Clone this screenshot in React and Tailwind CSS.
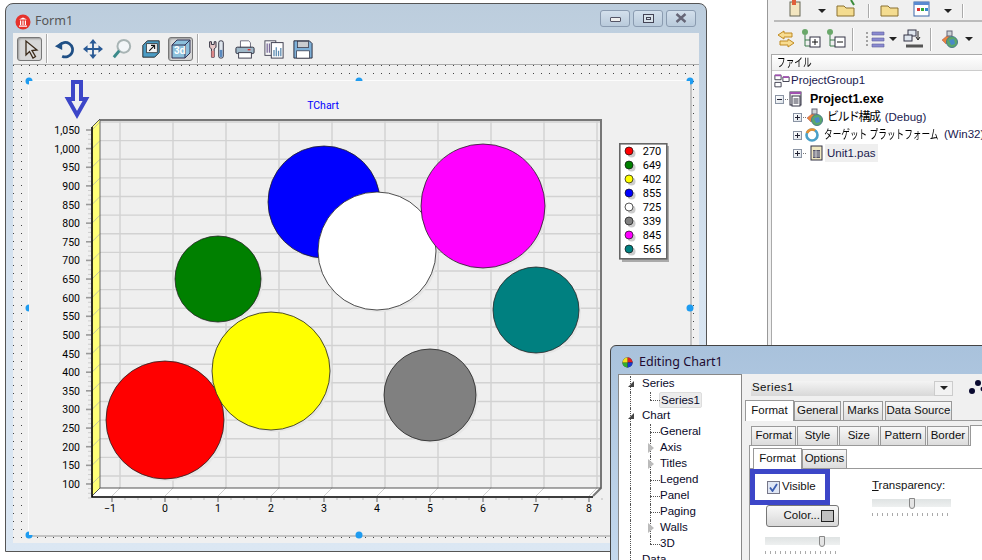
const CJK = "font-['Liberation_Sans','Noto_Sans_CJK_JP',sans-serif]";

function Sep({ h = 'h-[29px]' }) {
  return <div className={`w-[2px] ${h} border-l border-[#aaa] border-r-white border-r`} />;
}

function TbIcon({ children, pressed, w = 20 }) {
  return (
    <div className={`flex items-center justify-center h-[24px] ${pressed ? 'w-[25px] rounded-[3px] border border-[#777] bg-[#d8d8d8] shadow-[inset_1px_1px_2px_#999]' : ''}`} style={pressed ? undefined : { width: w }}>
      <svg width="22" height="22" viewBox="0 0 22 22">{children}</svg>
    </div>
  );
}

function FormToolbar() {
  return (
    <div className="h-[32px] shrink-0 flex items-center pl-[4px] bg-[#efefef] border-b border-[#aaa]">
      <TbIcon pressed>
        <path d="M7 3 L7 17 L10.5 13.5 L14 20 L16.5 18.5 L13 12.5 L18 12 Z" fill="#ddd" stroke="#3a2a1a" strokeWidth="1.3" />
      </TbIcon>
      <div className="ml-[4px] mr-[6px]"><Sep /></div>
      <div className="flex items-center gap-[9px]">
        <TbIcon>
          <path d="M6 7 A8 8 0 1 1 9 19" fill="none" stroke="#1f4f85" strokeWidth="3" />
          <path d="M1 8 L9 3 L9 12 Z" fill="#1f4f85" />
        </TbIcon>
        <TbIcon>
          <path d="M11 2 V20 M2 11 H20" stroke="#2a5a95" strokeWidth="2" />
          <path d="M11 0 L15 5 H7 Z M11 22 L15 17 H7 Z M0 11 L5 7 V15 Z M22 11 L17 7 V15 Z" fill="#2a5a95" />
        </TbIcon>
        <TbIcon>
          <circle cx="13" cy="8" r="7" fill="#f2f6f8" stroke="#a8b4b4" strokeWidth="2.2" />
          <path d="M8 13 L2 20" stroke="#3a8a8a" strokeWidth="3.2" />
        </TbIcon>
        <TbIcon>
          <path d="M2 7 L7 2 H20 V15 L15 20 H2 Z" fill="#4b9cc4" stroke="#222" strokeWidth="1" />
          <path d="M6 6 H18 V16 H6 Z" fill="#f4f4f4" stroke="#222" strokeWidth="0.8" transform="translate(0,-1)" />
          <path d="M9 13 L15 7 M11 7 H15 V11" fill="none" stroke="#111" strokeWidth="1.2" />
        </TbIcon>
      </div>
      <div className="ml-[7px]">
        <TbIcon pressed>
          <path d="M2 7 L7 2 H20 V15 L15 20 H2 Z" fill="#8cc0dc" stroke="#335" strokeWidth="1" />
          <path d="M2 7 H15 V20 M15 7 L20 2" fill="none" stroke="#335" />
          <text x="4" y="16" fontSize="10" fontWeight="700" fill="#fff" className="font-['Liberation_Sans']">3d</text>
        </TbIcon>
      </div>
      <div className="ml-[4px] mr-[7px]"><Sep /></div>
      <div className="flex items-center gap-[9px]">
        <TbIcon>
          <path d="M4 3 V9 L6 11 V20 H9 V11 L11 9 V3 L9 3 V6 H6 V3 Z" fill="#e8c8c8" stroke="#223" strokeWidth="1" />
          <path d="M6 13 H9 V20 H6 Z" fill="#d88" />
          <rect x="14" y="2" width="5" height="19" rx="2" fill="#dfe6ee" stroke="#223" />
          <rect x="15" y="12" width="3" height="8" fill="#5a8ac0" />
        </TbIcon>
        <TbIcon>
          <path d="M6 2 H15 L17 4 V10 H6 Z" fill="#fff" stroke="#667" />
          <rect x="1" y="9" width="20" height="7" rx="1.5" fill="#9fb8c8" stroke="#223" />
          <rect x="4" y="15" width="14" height="6" fill="#fff" stroke="#334" />
          <rect x="14" y="11" width="3" height="1.5" fill="#d33" />
        </TbIcon>
        <TbIcon>
          <rect x="1" y="2" width="12" height="16" fill="#f7f7f7" stroke="#445" />
          <rect x="8" y="4" width="13" height="17" fill="#fff" stroke="#334" />
          <path d="M3.5 5 V15 M6 5 V15" stroke="#7a6a9a" strokeWidth="1.4" />
          <path d="M11 12 V19 M13.5 9 V19 M16 13 V19 M18.5 10 V19" stroke="#5a8ab0" strokeWidth="1.4" />
        </TbIcon>
        <TbIcon>
          <path d="M1 2 H18 L21 5 V21 H1 Z" fill="#7eb0d8" stroke="#223" />
          <rect x="5" y="2.5" width="12" height="7" fill="#c9ccd0" stroke="#334" strokeWidth="0.8" />
          <rect x="4" y="13" width="14" height="8" fill="#fff" stroke="#334" strokeWidth="0.8" />
        </TbIcon>
      </div>
    </div>
  );
}

const bubbles = [
  [165, 420, 59, '#ff0000'], [218, 279, 43, '#008000'], [271, 371, 59, '#ffff00'], [324, 202, 56, '#0000ff'],
  [377, 251, 59, '#ffffff'], [430, 395, 46, '#808080'], [483, 206, 62, '#ff00ff'], [536, 310, 43, '#008080'],
];
const legend = [
  ['270', '#ff0000'], ['649', '#008000'], ['402', '#ffff00'], ['855', '#0000ff'],
  ['725', '#ffffff'], ['339', '#808080'], ['845', '#ff00ff'], ['565', '#008080'],
];
const yVals = ['1,050', '1,000', '950', '900', '850', '800', '750', '700', '650', '600', '550', '500', '450', '400', '350', '300', '250', '200', '150', '100'];
const yAt = (i) => 130 + i * 18.63;
const xAt = (i) => 112 + i * 53;

function Chart() {
  return (
    <svg className="block overflow-visible font-['Roboto',sans-serif]" width="661" height="454" viewBox="29 81 661 454">
      <text x="323" y="109" fontSize="10.5" fill="#0000ff" textAnchor="middle">TChart</text>
      <path d="M73 82 H81 V99 H86 L77 115 L68 99 H73 Z" fill="none" stroke="#3c46c8" strokeWidth="4" />
      <rect x="100" y="119" width="501" height="369" fill="#efefef" />
      {yVals.map((_, i) => <line key={i} x1="100" x2="601" y1={yAt(i) - 8} y2={yAt(i) - 8} stroke="#d2d2d2" strokeWidth="1.4" />)}
      {Array.from({ length: 10 }).map((_, i) => <line key={i} x1={xAt(i) + 8} x2={xAt(i) + 8} y1="119" y2="488" stroke="#d2d2d2" strokeWidth="1.4" />)}
      <path d="M92 127 L100 119 V488 L92 496 Z" fill="#ffff78" />
      {yVals.map((_, i) => <line key={i} x1="92" x2="100" y1={yAt(i)} y2={yAt(i) - 8} stroke="#c8c8a0" />)}
      <path d="M92 496 L100 488 H601 L593 496 Z" fill="#ffffff" />
      {Array.from({ length: 10 }).map((_, i) => <line key={i} x1={xAt(i)} x2={xAt(i) + 8} y1="496" y2="488" stroke="#cfcfcf" />)}
      <path d="M100 120 H601 V488 L593 496" fill="none" stroke="#777" strokeWidth="2" />
      <path d="M100 488 V120" stroke="#666" strokeWidth="1" />
      <path d="M100 488 H601" stroke="#555" strokeWidth="1.2" />
      <path d="M92 127 L100 119 M92 496 L100 488" stroke="#555" />
      <path d="M92 127 V497 H593" fill="none" stroke="#000" strokeWidth="1.6" />
      {yVals.map((v, i) => (
        <g key={v}>
          <line x1="86" x2="91" y1={yAt(i)} y2={yAt(i)} stroke="#999" strokeWidth="1.6" />
          <line x1="88" x2="91" y1={yAt(i) + 4.6} y2={yAt(i) + 4.6} stroke="#ccc" />
          <line x1="88" x2="91" y1={yAt(i) + 9.3} y2={yAt(i) + 9.3} stroke="#ccc" />
          <line x1="88" x2="91" y1={yAt(i) + 14} y2={yAt(i) + 14} stroke="#ccc" />
          <text x="80" y={yAt(i) + 4} fontSize="10.5" fill="#000" textAnchor="end">{v}</text>
        </g>
      ))}
      {Array.from({ length: 10 }).map((_, i) => (
        <g key={i}>
          <line x1={xAt(i)} x2={xAt(i)} y1="498" y2="502" stroke="#999" strokeWidth="1.6" />
          <line x1={xAt(i) + 13} x2={xAt(i) + 13} y1="498" y2="500" stroke="#bbb" />
          <line x1={xAt(i) + 26} x2={xAt(i) + 26} y1="498" y2="500" stroke="#bbb" />
          <line x1={xAt(i) + 39} x2={xAt(i) + 39} y1="498" y2="500" stroke="#bbb" />
          <text x={xAt(i) - (i === 0 ? 2 : 0)} y="512" fontSize="10.5" fill="#000" textAnchor="middle">{i === 0 ? '−1' : i - 1}</text>
        </g>
      ))}
      {bubbles.map(([cx, cy, r, c]) => (
        <g key={cx}>
          <circle cx={cx + 2} cy={cy + 2} r={r} fill="#e6e6e6" />
          <circle cx={cx} cy={cy} r={r} fill={c} stroke="#222" strokeWidth="0.8" />
        </g>
      ))}
      <rect x="622" y="146" width="47" height="116" fill="#aaa" />
      <rect x="619.8" y="143.8" width="47" height="115" fill="#fff" stroke="#666" strokeWidth="1.6" />
      {legend.map(([v, c], i) => (
        <g key={v}>
          <circle cx="630" cy={152 + i * 14} r="4" fill="#ccc" transform="translate(1.5 1.5)" />
          <circle cx="629" cy={151 + i * 14} r="4" fill={c} stroke="#111" strokeWidth="0.7" />
          <text x="652" y={154.5 + i * 14} fontSize="11" textAnchor="middle" fill="#000">{v}</text>
        </g>
      ))}
      <g fill="#1f9cf0">
        <path d="M29 81 L29 84.5 A3.5 3.5 0 1 1 32.5 81 Z" />
        <path d="M690 81 L686.5 81 A3.5 3.5 0 1 1 690 84.5 Z" />
        <path d="M29 535 L29 531.5 A3.5 3.5 0 1 0 32.5 535 Z" />
        <path d="M355.5 81 A3.5 3.5 0 0 1 362.5 81 Z" />
        <path d="M29 304.5 A3.5 3.5 0 0 0 29 311.5 Z" />
        <circle cx="690" cy="308" r="3.5" />
        <circle cx="359" cy="535" r="3.5" />
        <circle cx="690" cy="535" r="3.5" />
      </g>
    </svg>
  );
}

function WinBtn({ children }) {
  return (
    <div className="w-[30px] h-[17px] flex items-center justify-center rounded-[3px] border border-[#8a9bb0] bg-gradient-to-b from-[#d3e0ec] to-[#b9cadb]">
      {children}
    </div>
  );
}

function FormWindow() {
  return (
    <div className="absolute left-[5px] top-[3px] w-[702px] h-[549px] flex flex-col rounded-t-[8px] border border-[#555] bg-gradient-to-b from-[#bccddd] via-[#d7e4f1] to-[#dbe7f3] pl-[7px] pr-[7px] pb-[8px]">
      <div className="h-[29px] shrink-0 flex items-center pt-[6px]">
        <svg width="16" height="16" viewBox="0 0 16 16" className="ml-[2px]">
          <circle cx="8" cy="8" r="7.5" fill="#e6322c" />
          <path d="M4 5.5 L8 3.5 L12 5.5 Z M4 11.5 H12 V12.8 H4 Z M5 6.5 H6.2 V11 H5 Z M7.4 6.5 H8.6 V11 H7.4 Z M9.8 6.5 H11 V11 H9.8 Z" fill="#fff" />
        </svg>
        <span className="ml-[4px] text-[12.5px] text-[#555] font-['Noto_Sans',sans-serif]">Form1</span>
        <div className="ml-auto flex gap-[3px] mr-[3px] -mt-[7px]">
          <WinBtn><div className="w-[11px] h-[5px] mt-[3px] border border-[#556] bg-[#eee] rounded-[1px]" /></WinBtn>
          <WinBtn><div className="w-[11px] h-[9px] border border-[#445] bg-[#d8e2ea] flex items-center justify-center"><div className="w-[5px] h-[3px] border border-[#445]" /></div></WinBtn>
          <WinBtn>
            <svg width="12" height="10" viewBox="0 0 12 10"><path d="M1.5 1 L10.5 9 M10.5 1 L1.5 9" stroke="#667" strokeWidth="2.4" /></svg>
          </WinBtn>
        </div>
      </div>
      <FormToolbar />
      <div className="relative flex-1 min-h-0 bg-[#f0f0f0] pl-[15px] pt-[15px]">
        <div className="absolute inset-0 bg-[linear-gradient(90deg,#444_1px,transparent_1px)] bg-[size:8px_8px] [mask-image:linear-gradient(#000_1px,transparent_1px)] [mask-size:8px_8px]" />
        <div className="relative box-content w-[661px] h-[454px] bg-[#f0f0f0] border-l border-t border-[#fcfcfc] border-r-2 border-b-2 border-r-[#c4c4c4] border-b-[#c4c4c4]">
          <Chart />
        </div>
      </div>
    </div>
  );
}

function Plus({ minus }) {
  return (
    <div className="w-[9px] h-[9px] border border-[#8a94a4] bg-gradient-to-br from-white to-[#dde3ea] flex items-center justify-center relative shrink-0">
      <div className="w-[5px] h-[1px] bg-[#223]" />
      {!minus && <div className="absolute w-[1px] h-[5px] bg-[#223]" />}
    </div>
  );
}

function Gear() {
  return (
    <svg width="18" height="18" viewBox="0 0 18 18" className="shrink-0">
      <path d="M1 10 L7 5 L10 8 L5 14 Z" fill="#e8843c" stroke="#a55" strokeWidth="0.5" />
      <rect x="6" y="1" width="5" height="5" fill="#cfd4d8" stroke="#667" />
      <circle cx="11" cy="12" r="5.5" fill="#5aa86a" stroke="#4a7a8a" />
      <path d="M8 10 L13 9 L14 14 L10 15 Z" fill="#4a8ac8" />
    </svg>
  );
}

function IdeTool({ children }) {
  return <svg width="22" height="22" viewBox="0 0 22 22" className="shrink-0">{children}</svg>;
}

function Caret() {
  return <div className="w-0 h-0 border-x-[4px] border-x-transparent border-t-[4px] border-t-[#222]" />;
}

function Ide() {
  return (
    <div className="absolute left-[767px] top-0 w-[215px] h-[350px] flex flex-col bg-[#f0f0f0] border-l border-[#999] pl-[2px]">
      <div className="h-[22px] shrink-0 flex items-end pl-[12px] border-b-2 border-[#bbb] ml-[4px] overflow-hidden">
        <div className="flex items-center gap-[10px] h-[30px] -mb-[6px]">
          <IdeTool><rect x="4" y="2" width="10" height="14" fill="#f3e6c0" stroke="#665" /><rect x="6" y="0" width="4" height="5" fill="#e0603a" /></IdeTool>
          <Caret />
          <IdeTool><path d="M1 6 H8 L10 8 H18 V16 H1 Z" fill="#f4dc90" stroke="#8a7030" /><path d="M15 0 L18 5" stroke="#3a8a3a" strokeWidth="2" /></IdeTool>
          <Sep h="h-[14px]" />
          <IdeTool><path d="M1 6 H8 L10 8 H18 V16 H1 Z" fill="#f4dc90" stroke="#8a7030" /></IdeTool>
          <IdeTool><rect x="2" y="2" width="15" height="14" fill="#fff" stroke="#3a66a8" /><rect x="2" y="2" width="15" height="3" fill="#5a8ad0" /><rect x="5" y="8" width="3" height="3" fill="#d33" /><rect x="9" y="8" width="3" height="3" fill="#3a3" /><rect x="13" y="8" width="3" height="3" fill="#38c" /></IdeTool>
          <Caret />
          <Sep h="h-[14px]" />
        </div>
      </div>
      <div className="h-[32px] shrink-0 flex items-center pl-[5px] pt-[2px]">
        <div className="flex items-center gap-[3px]">
          <IdeTool>
            <path d="M9 3 L3 7 L9 11 V9 H17 V5 H9 Z M13 11 L19 15 L13 19 V17 H5 V13 H13 Z" fill="#f8dc90" stroke="#c08a20" />
          </IdeTool>
          <IdeTool>
            <circle cx="5" cy="4" r="3" fill="#6aa86a" /><path d="M5 7 V18 H10 M5 12 H10" stroke="#3a7a4a" fill="none" />
            <rect x="10" y="9" width="10" height="10" fill="#fff" stroke="#334" /><path d="M12 14 H18 M15 11 V17" stroke="#111" />
          </IdeTool>
          <IdeTool>
            <circle cx="5" cy="4" r="3" fill="#6aa86a" /><path d="M5 7 V18 H10 M5 12 H10" stroke="#3a7a4a" fill="none" />
            <rect x="10" y="9" width="10" height="10" fill="#fff" stroke="#334" /><path d="M12 14 H18" stroke="#111" />
          </IdeTool>
        </div>
        <div className="ml-[5px] mr-[10px]"><Sep h="h-[23px]" /></div>
        <IdeTool>
          <path d="M8 4 H20 V7 H8 Z M8 10 H20 V13 H8 Z M8 16 H20 V19 H8 Z" fill="#8a8ad0" stroke="#5a5a9a" strokeWidth="0.6" />
          <path d="M3 4 V19" stroke="#555" strokeDasharray="2 2" />
        </IdeTool>
        <div className="ml-[3px] mr-[6px]"><Caret /></div>
        <IdeTool>
          <rect x="5" y="2" width="8" height="6" fill="#dfe6ee" stroke="#334" /><rect x="1" y="7" width="8" height="6" fill="#dfe6ee" stroke="#334" />
          <path d="M15 3 V11 M13 9 L15 12 L17 9" stroke="#222" fill="none" /><path d="M3 18 H20" stroke="#555" strokeWidth="3" />
        </IdeTool>
        <div className="ml-[5px] mr-[9px]"><Sep h="h-[23px]" /></div>
        <Gear />
        <div className="ml-[6px]"><Caret /></div>
      </div>
      <div className="flex-1 bg-white border-t border-l border-[#aaa] ml-[1px] font-['Liberation_Sans','Noto_Sans_CJK_JP',sans-serif] text-[11.5px] text-[#1a1a50]">
        <div className="h-[16px] flex items-center pl-[5px] text-[12px] text-black bg-gradient-to-b from-white to-[#f0f0f0] border-b border-[#ccc]">
          <span className="inline-block origin-left scale-x-[0.72] whitespace-nowrap">ファイル</span>
        </div>
        <div className="h-[18px] flex items-center pl-[2px] mt-[1px]">
          <svg width="16" height="15" viewBox="0 0 18 16" className="shrink-0"><path d="M1 1 H8 V6 H1 Z M10 3 H17 V8 H10 Z M1 9 H8 V14 H1 Z" fill="#fff" stroke="#334" /><path d="M1 1 H8 M10 3 H17" stroke="#a050b0" strokeWidth="2" /></svg>
          <span className="ml-[1px] whitespace-nowrap">ProjectGroup1</span>
        </div>
        <div className="h-[18px] flex items-center pl-[3px]">
          <Plus minus />
          <div className="w-[3px] ml-[1px] border-t border-dotted border-[#777]" />
          <svg width="16" height="16" viewBox="0 0 16 16" className="shrink-0"><rect x="2" y="1" width="11" height="13" fill="#eee" stroke="#334" /><rect x="2" y="1" width="11" height="2" fill="#a050b0" /><rect x="4" y="5" width="8" height="10" fill="#fff" stroke="#334" /><path d="M5.5 8 H10.5 M5.5 10 H10.5 M5.5 12 H10.5" stroke="#334" /></svg>
          <span className="ml-[6px] font-bold text-[12.5px] text-black whitespace-nowrap">Project1.exe</span>
        </div>
        <div className="h-[18px] flex items-center pl-[21px]">
          <Plus />
          <div className="w-[3px] ml-[1px] border-t border-dotted border-[#777]" />
          <Gear />
          <span className="ml-[3px] whitespace-nowrap"><span className="text-black tracking-[-1.5px] text-[12px] mr-[2px]">ビルド構成</span> (Debug)</span>
        </div>
        <div className="h-[18px] flex items-center pl-[21px]">
          <Plus />
          <div className="w-[3px] ml-[1px] border-t border-dotted border-[#777]" />
          <svg width="16" height="16" viewBox="0 0 16 16" className="shrink-0 mx-[1px]"><circle cx="8" cy="8" r="5.5" fill="none" stroke="#4aa0c8" strokeWidth="2.6" /><path d="M3 6 A5.5 5.5 0 0 1 11 3.4" fill="none" stroke="#e89030" strokeWidth="2.6" /></svg>
          <span className="ml-[3px] flex items-center whitespace-nowrap">
            <span className="inline-block w-[117px] origin-left scale-x-[0.72] text-[12px] text-black">ターゲット プラットフォーム</span>
            <span className="ml-[3px]">(Win32)</span>
          </span>
        </div>
        <div className="h-[18px] flex items-center pl-[21px]">
          <Plus />
          <div className="w-[3px] ml-[1px] border-t border-dotted border-[#777]" />
          <svg width="16" height="16" viewBox="0 0 16 16" className="shrink-0 ml-[2px]"><rect x="3" y="1" width="11" height="14" fill="#f0e8c0" stroke="#334" /><rect x="5" y="5" width="7" height="8" fill="#556" /><path d="M5 7 H12 M5 9 H12 M5 11 H12 M8 5 V13" stroke="#eee" strokeWidth="0.7" /></svg>
          <span className="ml-[1px] px-[2px] bg-[#efefef] whitespace-nowrap h-[18px] leading-[18px]">Unit1.pas</span>
        </div>
      </div>
    </div>
  );
}

function TreeRow({ label, depth, last, kind, selected }) {
  return (
    <div className="h-[16px] flex items-center text-[#0a0a2a] relative">
      <div className="w-[20px] h-[16px] shrink-0 border-l border-dotted border-[#555] relative">
        {depth === 0 && kind === 'open' && <div className="absolute -left-[3px] top-[5px] w-0 h-0 border-l-[6px] border-l-transparent border-b-[6px] border-b-[#444]" />}
      </div>
      {depth === 1 ? (
        <div className="flex items-center w-[10px] h-[16px] shrink-0 relative">
          {kind !== 'closed' && <div className="w-[10px] border-t border-dotted border-[#555]" />}
          <div className={`absolute left-0 top-0 border-l border-dotted border-[#555] ${last ? 'h-[8px]' : 'h-[16px]'}`} />
          {kind === 'closed' && <div className="absolute -left-[2px] top-[3px] w-0 h-0 border-y-[5px] border-y-transparent border-l-[6px] border-l-[#bbb]" />}
        </div>
      ) : <span className="-ml-[8px]" />}
      <span className={selected ? 'px-[1px] -ml-[1px] bg-[#ececec] border border-[#ddd] rounded-[2px] leading-[14px]' : ''}>{label}</span>
    </div>
  );
}

function Tab({ label, w, active, grad }) {
  return (
    <div className={`h-[19px] flex items-center justify-center border border-[#999] border-b-0 whitespace-nowrap ${active ? 'bg-white h-[21px] relative z-10 -mb-[1px]' : grad ? 'bg-gradient-to-b from-[#f8f8f8] to-[#dcdcdc]' : 'bg-[#f2f2f2]'}`} style={{ width: w }}>{label}</div>
  );
}

function Slider({ w, pos }) {
  return (
    <div style={{ width: w }}>
      <div className="h-[8px] bg-gradient-to-b from-[#dfe3e3] to-[#eef0f0] relative">
        <div className="absolute -top-[1px] w-[6px] h-[11px] bg-[#e4e4e4] border border-[#888] rounded-b-[3px]" style={{ left: pos }} />
      </div>
      <div className="h-[3px] mt-[6px] bg-[repeating-linear-gradient(90deg,#aaa_0px,#aaa_1px,transparent_1px,transparent_5px)]" />
    </div>
  );
}

function EditDialog() {
  return (
    <div className="absolute left-[610px] top-[345px] w-[400px] h-[230px] rounded-t-[6px] border border-[#444] bg-gradient-to-b from-[#a9c2dc] to-[#c6daee] font-['Liberation_Sans',sans-serif] text-[11.5px] text-[#111]">
      <div className="h-[28px] flex items-center pl-[11px] pt-[5px]">
        <svg width="11" height="11" viewBox="0 0 12 12"><circle cx="6" cy="6" r="5.5" fill="#111" /><path d="M6 6 L6 .5 A5.5 5.5 0 0 1 11.5 6 Z" fill="#e02020" /><path d="M6 6 L11.5 6 A5.5 5.5 0 0 1 6 11.5 Z" fill="#1a3ad0" /><path d="M6 6 L6 11.5 A5.5 5.5 0 0 1 .5 6 Z" fill="#30b030" /><path d="M6 6 L.5 6 A5.5 5.5 0 0 1 6 .5 Z" fill="#f0e020" /></svg>
        <span className="ml-[6px] text-[12.5px] text-[#200a30] font-['Noto_Sans',sans-serif]">Editing Chart1</span>
      </div>
      <div className="flex h-[202px] pl-[7px]">
        <div className="w-[124px] shrink-0 bg-white border-l border-t border-r border-[#888] pl-[11px] pt-[1px] overflow-hidden">
          <TreeRow label="Series" depth={0} kind="open" />
          <TreeRow label="Series1" depth={1} last selected />
          <TreeRow label="Chart" depth={0} kind="open" />
          <TreeRow label="General" depth={1} />
          <TreeRow label="Axis" depth={1} kind="closed" />
          <TreeRow label="Titles" depth={1} kind="closed" />
          <TreeRow label="Legend" depth={1} />
          <TreeRow label="Panel" depth={1} />
          <TreeRow label="Paging" depth={1} />
          <TreeRow label="Walls" depth={1} kind="closed" />
          <TreeRow label="3D" depth={1} last />
          <TreeRow label="Data" depth={0} />
        </div>
        <div className="flex-1 bg-[#f0f0f0] pl-[3px] pt-[6px] overflow-hidden">
          <div className="flex items-center ml-[6px] h-[16px]">
            <div className="w-[183px] h-[15px] flex items-center pl-[1px] bg-gradient-to-b from-[#f4f4f4] to-[#d8d8d8] tracking-[0.4px]">Series1</div>
            <div className="w-[19px] h-[15px] flex items-center justify-center bg-[#f2f2f2] border border-[#ccc]"><Caret /></div>
            <svg width="30" height="18" viewBox="0 0 30 18" className="ml-[16px]"><circle cx="3" cy="12" r="3" fill="#0a0a30" /><circle cx="9" cy="4" r="3" fill="#0a0a30" /><circle cx="14" cy="10" r="2.5" fill="#0a0a30" /></svg>
          </div>
          <div className="flex items-end mt-[4px] pl-[0px] h-[21px] border-b border-[#999]">
            <Tab label="Format" w={49} active />
            <Tab label="General" w={47} grad />
            <div className="w-[2px]" />
            <Tab label="Marks" w={40} grad />
            <div className="w-[2px]" />
            <Tab label="Data Source" w={67} grad />
          </div>
          <div className="flex items-end mt-[5px] pl-[6px] h-[19px]">
            <Tab label="Format" w={46} grad />
            <div className="w-[1px]" />
            <Tab label="Style" w={41} grad />
            <div className="w-[1px]" />
            <Tab label="Size" w={41} grad />
            <div className="w-[1px]" />
            <Tab label="Pattern" w={47} grad />
            <div className="w-[1px]" />
            <Tab label="Border" w={42} grad />
            <div className="w-[1px]" />
            <Tab label="S" w={40} active />
          </div>
          <div className="ml-[4px] bg-white border-l border-t border-[#999] h-[140px]">
            <div className="flex items-end pl-[3px] h-[23px] border-b border-[#999]">
              <Tab label="Format" w={49} active />
              <Tab label="Options" w={45} grad />
            </div>
            <div className="flex">
              <div className="w-[122px] shrink-0">
                <div className="w-[80px] h-[36px] border-[5px] border-[#3c46c8] flex items-center pl-[12px]">
                  <div className="w-[13px] h-[13px] border border-[#778] bg-[#dfe6f4] flex items-center justify-center">
                    <svg width="9" height="9" viewBox="0 0 9 9"><path d="M1 4.5 L3.5 8 L8 1" stroke="#3b5db0" strokeWidth="1.8" fill="none" /></svg>
                  </div>
                  <span className="ml-[2px] whitespace-nowrap">Visible</span>
                </div>
                <div className="ml-[16px] w-[73px] h-[22px] flex items-center justify-end gap-[1px] pr-[4px] border border-[#777] rounded-[3px] bg-gradient-to-b from-[#f8f8f8] to-[#d8d8d8] whitespace-nowrap">
                  Color...
                  <div className="w-[13px] h-[12px] border border-[#222] bg-[#c0c0c0]" />
                </div>
                <div className="ml-[15px] mt-[10px]"><Slider w={75} pos={54} /></div>
              </div>
              <div className="pt-[9px]">
                <div className="h-[16px] leading-[14px] whitespace-nowrap"><u>T</u>ransparency:</div>
                <div className="mt-[5px]"><Slider w={79} pos={37} /></div>
              </div>
            </div>
          </div>
        </div>
      </div>
    </div>
  );
}

export default function App() {
  return (
    <div className={`relative w-[982px] h-[560px] overflow-hidden bg-white ${CJK}`}>
      <Ide />
      <FormWindow />
      <EditDialog />
    </div>
  );
}
